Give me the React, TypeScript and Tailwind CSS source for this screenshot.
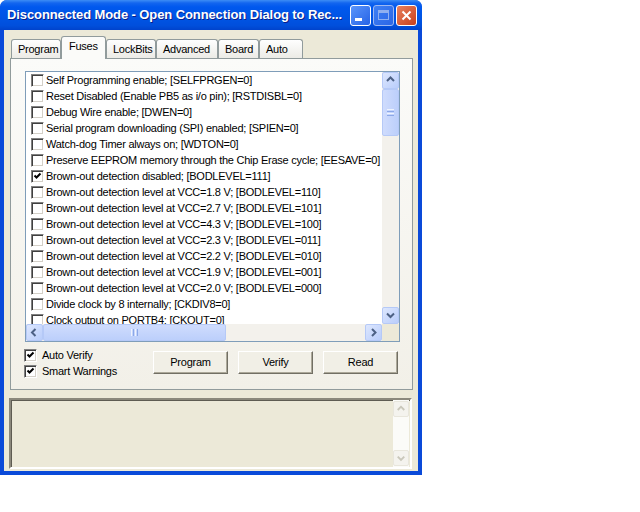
import React from "react";

const fuses = [
  { label: "Self Programming enable; [SELFPRGEN=0]", checked: false },
  { label: "Reset Disabled (Enable PB5 as i/o pin); [RSTDISBL=0]", checked: false },
  { label: "Debug Wire enable; [DWEN=0]", checked: false },
  { label: "Serial program downloading (SPI) enabled; [SPIEN=0]", checked: false },
  { label: "Watch-dog Timer always on; [WDTON=0]", checked: false },
  { label: "Preserve EEPROM memory through the Chip Erase cycle; [EESAVE=0]", checked: false },
  { label: "Brown-out detection disabled; [BODLEVEL=111]", checked: true },
  { label: "Brown-out detection level at VCC=1.8 V; [BODLEVEL=110]", checked: false },
  { label: "Brown-out detection level at VCC=2.7 V; [BODLEVEL=101]", checked: false },
  { label: "Brown-out detection level at VCC=4.3 V; [BODLEVEL=100]", checked: false },
  { label: "Brown-out detection level at VCC=2.3 V; [BODLEVEL=011]", checked: false },
  { label: "Brown-out detection level at VCC=2.2 V; [BODLEVEL=010]", checked: false },
  { label: "Brown-out detection level at VCC=1.9 V; [BODLEVEL=001]", checked: false },
  { label: "Brown-out detection level at VCC=2.0 V; [BODLEVEL=000]", checked: false },
  { label: "Divide clock by 8 internally; [CKDIV8=0]", checked: false },
  { label: "Clock output on PORTB4; [CKOUT=0]", checked: false },
];

const tabs = [
  { name: "Program", w: "w-[50px]" },
  { name: "Fuses", w: "w-[45px]" },
  { name: "LockBits", w: "w-[50px]" },
  { name: "Advanced", w: "w-[62px]" },
  { name: "Board", w: "w-[41px]" },
  { name: "Auto", w: "w-[44px]" },
];

function CheckBox({ checked }: { checked: boolean }) {
  return (
    <span className="relative w-[13px] h-[13px] shrink-0 bg-white border border-[#808080] border-r-white border-b-white shadow-[inset_1px_1px_0_#404040,inset_-1px_-1px_0_#d4d0c8]">
      {checked && (
        <svg className="absolute left-[1px] top-[1px]" width="9" height="9" viewBox="0 0 9 9">
          <path d="M1.5 3.5 L3.5 5.5 L7.5 1.5" stroke="#000" strokeWidth="2" fill="none" />
        </svg>
      )}
    </span>
  );
}

// little chevron for the scroll buttons
function Arrow({ dir, faded }: { dir: "up" | "down" | "left" | "right"; faded?: boolean }) {
  const d = {
    up: "M4 8 L7.5 4.5 L11 8",
    down: "M4 5.5 L7.5 9 L11 5.5",
    left: "M8.5 4 L5 7.5 L8.5 11",
    right: "M6 4 L9.5 7.5 L6 11",
  }[dir];
  return (
    <svg width="15" height="15" viewBox="0 0 15 15">
      <path d={d} stroke={faded ? "#c9c7ba" : "#4d6185"} strokeWidth="2" fill="none" />
    </svg>
  );
}

function ScrollBtn({ dir }: { dir: "up" | "down" | "left" | "right" }) {
  return (
    <div className="w-[17px] h-[17px] shrink-0 flex items-center justify-center rounded-[2px] border border-[#b5c9f7] bg-[linear-gradient(135deg,#dde7fe,#b9cdfb)]">
      <Arrow dir={dir} />
    </div>
  );
}

function VScroll() {
  return (
    <div className="w-[17px] flex flex-col bg-[#f3f1ec]">
      <ScrollBtn dir="up" />
      <div className="h-[47px] rounded-[2px] border border-[#b5c9f7] bg-[linear-gradient(90deg,#cfdcfd,#bccffb)] flex flex-col items-center justify-center gap-[1px]">
        <div className="w-[7px] h-[1px] bg-[#eef3fe]" />
        <div className="w-[7px] h-[1px] bg-[#8ca8e8]" />
        <div className="w-[7px] h-[1px] bg-[#eef3fe]" />
        <div className="w-[7px] h-[1px] bg-[#8ca8e8]" />
      </div>
      <div className="flex-1" />
      <ScrollBtn dir="down" />
    </div>
  );
}

function HScroll() {
  return (
    <div className="flex-1 flex bg-[#f3f1ec]">
      <ScrollBtn dir="left" />
      <div className="w-[183px] rounded-[2px] border border-[#b5c9f7] bg-[linear-gradient(180deg,#cfdcfd,#bccffb)] flex items-center justify-center gap-[1px]">
        <div className="h-[7px] w-[1px] bg-[#eef3fe]" />
        <div className="h-[7px] w-[1px] bg-[#8ca8e8]" />
        <div className="h-[7px] w-[1px] bg-[#eef3fe]" />
        <div className="h-[7px] w-[1px] bg-[#8ca8e8]" />
      </div>
      <div className="flex-1" />
      <ScrollBtn dir="right" />
    </div>
  );
}

function XpButton({ label }: { label: string }) {
  return (
    <div className="w-[75px] h-[23px] flex items-center justify-center bg-[#f1efe6] border border-white border-r-[#716f64] border-b-[#716f64] shadow-[inset_-1px_-1px_0_#aca899]">
      {label}
    </div>
  );
}

export default function App() {
  return (
    <div className="w-[640px] h-[512px] bg-white font-['Liberation_Sans',Arial,sans-serif] text-[11px] tracking-[-0.25px] text-black">
      <div className="w-[422px] h-[475px] flex flex-col rounded-t-[7px] bg-[#0a4ad9] overflow-hidden">
        {/* title bar */}
        <div className="h-[30px] shrink-0 flex items-center pl-[7px] pr-[5px] bg-[linear-gradient(to_bottom,#3d8df5_0px,#1366ef_3px,#0058ee_7px,#0055e5_55%,#004fdc_85%,#0043cc_100%)]">
          <div className="flex-1 text-white font-bold text-[13px] tracking-[-0.1px] [text-shadow:1px_1px_#0a1e8a] whitespace-nowrap">
            Disconnected Mode - Open Connection Dialog to Rec...
          </div>
          <div className="flex gap-[2px]">
            <div className="w-[21px] h-[21px] rounded-[3px] border border-white bg-[linear-gradient(135deg,#5a95fb,#2663e6)] flex items-end pl-[4px] pb-[4px]">
              <div className="w-[7px] h-[3px] bg-white" />
            </div>
            <div className="w-[21px] h-[21px] rounded-[3px] border border-[#9db8f2] bg-[linear-gradient(135deg,#3f80f4,#2a66e6)] flex items-center justify-center">
              <div className="w-[11px] h-[10px] border border-[#8fb0f0] border-t-[3px]" />
            </div>
            <div className="w-[21px] h-[21px] rounded-[3px] border border-white bg-[linear-gradient(135deg,#e8815f,#c9401c)] flex items-center justify-center">
              <svg width="13" height="13" viewBox="0 0 13 13">
                <path d="M2.5 2.5 L10.5 10.5 M10.5 2.5 L2.5 10.5" stroke="#fff" strokeWidth="2" />
              </svg>
            </div>
          </div>
        </div>

        {/* window body */}
        <div className="flex-1 mx-[4px] mb-[4px] bg-[#ece9d8] flex flex-col pt-[6px]">
          <div className="relative z-10 h-[22px] ml-[7px] flex items-end">
            {tabs.map(t =>
              t.name === "Fuses" ? (
                <div
                  key={t.name}
                  className={`${t.w} h-[23px] -mb-[1px] pl-[7px] pt-[1px] bg-[#fbfbf9] border border-b-0 border-[#919b9c] rounded-t-[3px]`}
                >
                  {t.name}
                </div>
              ) : (
                <div
                  key={t.name}
                  className={`${t.w} h-[19px] pl-[6px] pt-[1px] border border-b-0 border-[#919b9c] rounded-t-[3px] bg-[linear-gradient(to_bottom,#fefefe,#ecebe6)]`}
                >
                  {t.name}
                </div>
              )
            )}
          </div>

          {/* tab page */}
          <div className="ml-[6px] w-[403px] h-[332px] border border-[#919b9c] bg-[linear-gradient(to_bottom,#fbfbf9,#f2f0e8)] flex flex-col">
            <div className="ml-[14px] mt-[12px] w-[375px] h-[271px] border border-[#7f9db9] bg-white flex flex-col">
              <div className="flex flex-1 min-h-0">
                <div className="flex-1 overflow-hidden pl-[5px]">
                  {fuses.map(f => (
                    <div key={f.label} className="h-[16px] flex items-center whitespace-nowrap">
                      <CheckBox checked={f.checked} />
                      <span className="ml-[2px]">{f.label}</span>
                    </div>
                  ))}
                </div>
                <VScroll />
              </div>
              <div className="h-[17px] flex">
                <HScroll />
                <div className="w-[17px] bg-[#ece9d8]" />
              </div>
            </div>

            <div className="flex mt-[5px] ml-[13px]">
              <div className="w-[129px] flex flex-col">
                <div className="h-[16px] flex items-center">
                  <CheckBox checked />
                  <span className="ml-[5px]">Auto Verify</span>
                </div>
                <div className="h-[16px] flex items-center">
                  <CheckBox checked />
                  <span className="ml-[5px]">Smart Warnings</span>
                </div>
              </div>
              <div className="flex gap-[10px] mt-[4px]">
                <XpButton label="Program" />
                <XpButton label="Verify" />
                <XpButton label="Read" />
              </div>
            </div>
          </div>

          {/* output box */}
          <div className="ml-[5px] mt-[8px] w-[403px] h-[71px] flex border-2 border-[#8b887c] border-r-white border-b-white shadow-[inset_1px_1px_0_#5e5c52]">
            <div className="flex-1" />
            <div className="w-[16px] flex flex-col bg-[#fbfbf8] mr-[1px]">
              <div className="w-[16px] h-[16px] mt-[1px] flex items-center justify-center rounded-[2px] border border-[#e8e6dc] bg-[#f4f3ee]">
                <Arrow dir="up" faded />
              </div>
              <div className="flex-1" />
              <div className="w-[16px] h-[16px] mb-[1px] flex items-center justify-center rounded-[2px] border border-[#e8e6dc] bg-[#f4f3ee]">
                <Arrow dir="down" faded />
              </div>
            </div>
          </div>
        </div>
      </div>
    </div>
  );
}
